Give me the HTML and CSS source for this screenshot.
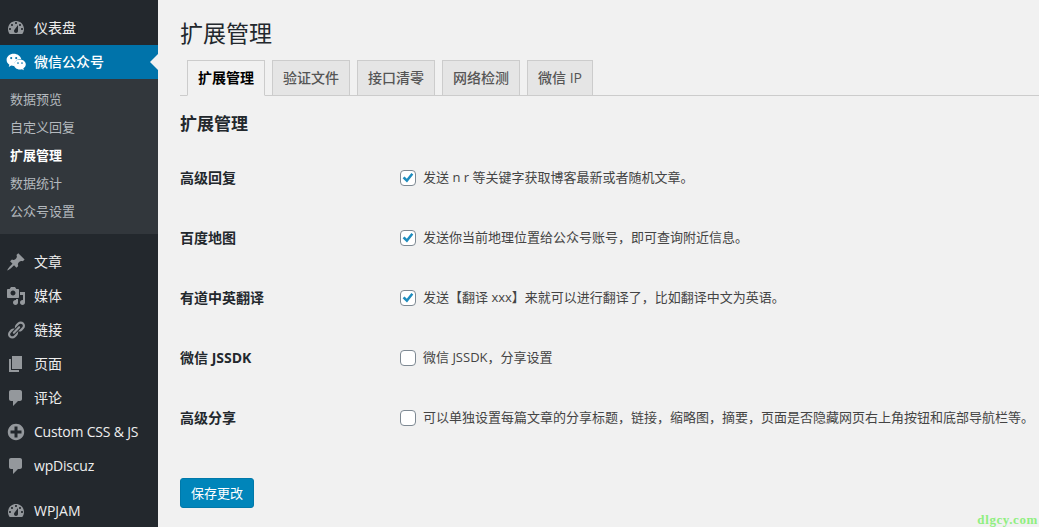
FILE: index.html
```html
<!DOCTYPE html>
<html lang="zh-CN">
<head>
<meta charset="utf-8">
<title>扩展管理</title>
<link rel="stylesheet" href="styles.css">
</head>
<body>
<div class="page">
  <nav class="side">
    <ul class="menu">
      <li class="item"><svg class="ico" viewBox="0 0 20 20"><path fill-rule="evenodd" d="M3.76 16h12.48c1.1-1.37 1.76-3.11 1.76-5 0-4.42-3.58-8-8-8s-8 3.58-8 8c0 1.89.66 3.63 1.76 5zM10 4c.55 0 1 .45 1 1s-.45 1-1 1-1-.45-1-1 .45-1 1-1zM6 6c.55 0 1 .45 1 1s-.45 1-1 1-1-.45-1-1 .45-1 1-1zm8 0c.55 0 1 .45 1 1s-.45 1-1 1-1-.45-1-1 .45-1 1-1zm-5.37 5.55L12 7v6c0 1.1-.9 2-2 2s-2-.9-2-2c0-.57.24-1.08.63-1.45zM4 10c.55 0 1 .45 1 1s-.45 1-1 1-1-.45-1-1 .45-1 1-1zm12 0c.55 0 1 .45 1 1s-.45 1-1 1-1-.45-1-1 .45-1 1-1z"/></svg><span>仪表盘</span></li>
      <li class="item active"><svg class="ico" viewBox="0 0 20 20"><path d="M7.800 1.800C3.800 1.800.6 4.500.6 7.900c0 1.900 1.100 3.600 2.800 4.800l-.7 2.200 2.500-1.300c.8.200 1.700.4 2.600.4h.7a5 5 0 0 1-.3-1.500c0-3.100 2.800-5.600 6.300-5.600h.7C14.300 3.900 11.300 1.800 7.800 1.800z"/><path d="M19.800 12.500c0-2.800-2.700-5-5.900-5-3.300 0-6 2.200-6 5s2.700 5 6 5c.7 0 1.400-.1 2-.3l2 1.100-.6-1.800c1.500-1.100 2.500-2.500 2.500-4z"/><g fill="#0073aa"><circle cx="5.200" cy="6.100" r="1.050"/><circle cx="10.200" cy="6.100" r="1.050"/><circle cx="12" cy="11" r=".85"/><circle cx="16" cy="11" r=".85"/></g></svg><span>微信公众号</span></li>
      <li>
        <ul class="sub">
          <li>数据预览</li>
          <li>自定义回复</li>
          <li class="cur">扩展管理</li>
          <li>数据统计</li>
          <li>公众号设置</li>
        </ul>
      </li>
      <li class="item gap"><svg class="ico" viewBox="0 0 20 20"><path d="M10.440 3.020l1.820-1.820 6.360 6.350-1.830 1.820c-1.050-.68-2.480-.57-3.410.36l-.75.75c-.92.93-1.040 2.350-.35 3.410l-1.830 1.820-2.410-2.410-2.800 2.790c-.42.42-3.380 2.710-3.800 2.290s1.860-3.390 2.280-3.810l2.790-2.790L4.100 9.360l1.830-1.820c1.050.69 2.480.57 3.400-.36l.75-.75c.93-.92 1.050-2.350.36-3.410z"/></svg><span>文章</span></li>
      <li class="item"><svg class="ico" viewBox="0 0 20 20"><path fill-rule="evenodd" d="M13 11V4c0-.55-.45-1-1-1h-1.670L9 1H5L3.670 3H2c-.55 0-1 .45-1 1v7c0 .55.45 1 1 1h10c.55 0 1-.45 1-1zM7 4.500c1.380 0 2.500 1.120 2.500 2.500S8.380 9.500 7 9.500 4.500 8.380 4.500 7 5.620 4.500 7 4.500zM14 6h5v10.500c0 1.380-1.120 2.500-2.500 2.500S14 17.880 14 16.500s1.120-2.500 2.500-2.500c.17 0 .34.02.5.05V9h-3V6zm-4 8.050V13h2v3.500c0 1.380-1.120 2.500-2.500 2.500S7 17.880 7 16.500 8.120 14 9.500 14c.17 0 .34.02.5.05z"/></svg><span>媒体</span></li>
      <li class="item"><svg class="ico" viewBox="0 0 20 20"><path d="M17.740 2.760c1.680 1.690 1.680 4.410 0 6.100l-1.530 1.520c-1.120 1.120-2.700 1.470-4.140 1.090l2.620-2.610.76-.77.76-.76c.84-.84.84-2.200 0-3.040-.84-.85-2.200-.85-3.040 0l-.77.76-3.380 3.380c-.37-1.440-.02-3.020 1.100-4.140l1.520-1.530c1.690-1.680 4.420-1.680 6.100 0zM8.590 13.430l5.340-5.340c.42-.42.42-1.100 0-1.520-.44-.43-1.130-.39-1.530 0l-5.330 5.340c-.42.42-.42 1.100 0 1.520.44.43 1.130.39 1.520 0zm-.76 2.290l4.140-4.150c.38 1.440.03 3.020-1.090 4.140l-1.520 1.530c-1.690 1.680-4.410 1.680-6.100 0-1.680-1.680-1.680-4.420 0-6.100l1.530-1.520c1.120-1.120 2.700-1.470 4.140-1.100l-4.140 4.150c-.85.84-.85 2.200 0 3.050.84.84 2.200.84 3.040 0z"/></svg><span>链接</span></li>
      <li class="item"><svg class="ico" viewBox="0 0 20 20"><path d="M6 15V2h10v13H6zm-1 1h8v2H3V5h2v11z"/></svg><span>页面</span></li>
      <li class="item"><svg class="ico" viewBox="0 0 20 20"><path d="M5 2h9c1.100 0 2 .9 2 2v7c0 1.100-.9 2-2 2h-2l-5 5v-5H5c-1.100 0-2-.9-2-2V4c0-1.100.9-2 2-2z"/></svg><span>评论</span></li>
      <li class="item"><svg class="ico" viewBox="0 0 20 20"><path fill-rule="evenodd" d="M15.800 4.200c3.200 3.210 3.200 8.390 0 11.600-3.210 3.200-8.390 3.200-11.600 0C1 12.590 1 7.410 4.200 4.200 7.410 1 12.590 1 15.800 4.200zm-4.300 11.300v-4h4v-3h-4v-4h-3v4h-4v3h4v4h3z"/></svg><span class="latin">Custom CSS &amp; JS</span></li>
      <li class="item"><svg class="ico" viewBox="0 0 20 20"><path d="M5 2h9c1.100 0 2 .9 2 2v7c0 1.100-.9 2-2 2h-2l-5 5v-5H5c-1.100 0-2-.9-2-2V4c0-1.100.9-2 2-2z"/></svg><span class="latin">wpDiscuz</span></li>
      <li class="item gap"><svg class="ico" viewBox="0 0 20 20"><path fill-rule="evenodd" d="M3.760 16h12.480c1.100-1.370 1.760-3.110 1.760-5 0-4.420-3.580-8-8-8s-8 3.580-8 8c0 1.890.66 3.630 1.760 5zM10 4c.55 0 1 .45 1 1s-.45 1-1 1-1-.45-1-1 .45-1 1-1zM6 6c.55 0 1 .45 1 1s-.45 1-1 1-1-.45-1-1 .45-1 1-1zm8 0c.55 0 1 .45 1 1s-.45 1-1 1-1-.45-1-1 .45-1 1-1zm-5.370 5.550L12 7v6c0 1.100-.9 2-2 2s-2-.9-2-2c0-.57.24-1.080.63-1.450zM4 10c.55 0 1 .45 1 1s-.45 1-1 1-1-.45-1-1 .45-1 1-1zm12 0c.55 0 1 .45 1 1s-.45 1-1 1-1-.45-1-1 .45-1 1-1z"/></svg><span>WPJAM</span></li>
    </ul>
  </nav>
  <main class="main">
    <h1 class="title">扩展管理</h1>
    <div class="tabs">
      <a class="tab on">扩展管理</a>
      <a class="tab">验证文件</a>
      <a class="tab">接口清零</a>
      <a class="tab">网络检测</a>
      <a class="tab">微信 IP</a>
    </div>
    <h2 class="head">扩展管理</h2>
    <div class="rows">
      <div class="row"><div class="label">高级回复</div><label class="opt"><span class="box checked"><svg viewBox="0 0 16 16"><path d="M2.600 8.300l1.900-1.900 2.300 2.300 4.600-5.700 1.900 1.500-6.300 8.100z"/></svg></span><span class="txt">发送 n r 等关键字获取博客最新或者随机文章。</span></label></div>
      <div class="row"><div class="label">百度地图</div><label class="opt"><span class="box checked"><svg viewBox="0 0 16 16"><path d="M2.600 8.300l1.900-1.900 2.300 2.300 4.600-5.700 1.900 1.500-6.300 8.100z"/></svg></span><span class="txt">发送你当前地理位置给公众号账号，即可查询附近信息。</span></label></div>
      <div class="row"><div class="label">有道中英翻译</div><label class="opt"><span class="box checked"><svg viewBox="0 0 16 16"><path d="M2.600 8.300l1.900-1.900 2.300 2.300 4.600-5.700 1.900 1.500-6.300 8.100z"/></svg></span><span class="txt">发送【翻译 xxx】来就可以进行翻译了，比如翻译中文为英语。</span></label></div>
      <div class="row"><div class="label">微信 JSSDK</div><label class="opt"><span class="box"></span><span class="txt">微信 JSSDK，分享设置</span></label></div>
      <div class="row"><div class="label">高级分享</div><label class="opt"><span class="box"></span><span class="txt">可以单独设置每篇文章的分享标题，链接，缩略图，摘要，页面是否隐藏网页右上角按钮和底部导航栏等。</span></label></div>
    </div>
    <button class="save" type="button">保存更改</button>
  </main>
</div>
<div class="mark">dlgcy.com</div>
</body>
</html>
```
FILE: styles.css
```css
* { box-sizing: border-box; }
html, body { margin: 0; padding: 0; height: 527px; overflow: hidden; }
body {
  background: #f1f1f1;
  color: #444;
  font-family: "Open Sans", "Noto Sans CJK SC", sans-serif;
  font-size: 13px;
  position: relative;
}
.page { display: flex; height: 527px; overflow: hidden; }
.side { width: 158px; flex: none; background: #23282d; padding-top: 11px; }
.menu, .sub { list-style: none; margin: 0; padding: 0; }
.item {
  display: flex;
  align-items: center;
  height: 34px;
  color: #eee;
  font-size: 14px;
  line-height: 18px;
  position: relative;
}
.item span { margin-left: 8px; }
.item .latin { letter-spacing: -.2px; }
.ico { width: 20px; height: 20px; margin-left: 6px; flex: none; fill: #94989c; }
.active { background: #0073aa; color: #fff; font-weight: 500; }
.active .ico { fill: #fff; }
.active::after {
  content: "";
  position: absolute;
  right: 0;
  top: 9px;
  border: 8px solid transparent;
  border-left-width: 0;
  border-right-color: #f1f1f1;
}
.gap { margin-top: 11px; }
.sub { background: #32373c; padding: 6px 0 9px; font-size: 13px; color: #b4b9be; }
.sub li { height: 28px; line-height: 28px; padding-left: 10px; }
.sub .cur { color: #fff; font-weight: 700; }
.main { flex: 1; min-width: 0; padding-left: 22px; }
.title { margin: 0; height: 60px; padding-top: 16px; font-size: 23px; line-height: 34px; font-weight: 400; color: #23282d; }
.tabs { display: flex; height: 36px; border-bottom: 1px solid #ccc; }
.tab {
  height: 36px;
  margin-left: 7px;
  padding: 0 10px;
  border: 1px solid #ccc;
  background: #e5e5e5;
  color: #555;
  font-size: 14px;
  font-weight: 500;
  line-height: 34px;
  white-space: nowrap;
}
.tab.on { background: #f1f1f1; border-bottom-color: #f1f1f1; color: #000; font-weight: 700; }
.head { margin: 0; height: 52px; padding-top: 15px; font-size: 17px; line-height: 26px; font-weight: 700; color: #23282d; }
.row { display: flex; align-items: center; height: 60px; }
.label { width: 220px; flex: none; font-size: 14px; font-weight: 700; color: #23282d; line-height: 20px; }
.opt { display: flex; align-items: center; line-height: 20px; white-space: nowrap; }
.txt { margin-bottom: 2px; }
.box {
  width: 16px;
  height: 16px;
  margin-right: 7px;
  flex: none;
  background: #fff;
  border: 1px solid #7e8993;
  border-radius: 4px;
  display: flex;
  align-items: center;
  justify-content: center;
}
.box svg { width: 16px; height: 16px; flex: none; fill: #1e8cbe; display: block; }
.save {
  display: block;
  margin-top: 30px;
  width: 74px;
  height: 30px;
  padding: 0;
  background: #0085ba;
  border: 1px solid #0079aa;
  border-radius: 3px;
  color: #fff;
  font: inherit;
  font-size: 13px;
  line-height: 28px;
}
.mark {
  position: absolute;
  right: 1px;
  bottom: 1px;
  font-family: "Liberation Serif", serif;
  font-size: 13px;
  font-weight: 700;
  line-height: 13px;
  letter-spacing: .6px;
  color: #8fef80;
}
```
